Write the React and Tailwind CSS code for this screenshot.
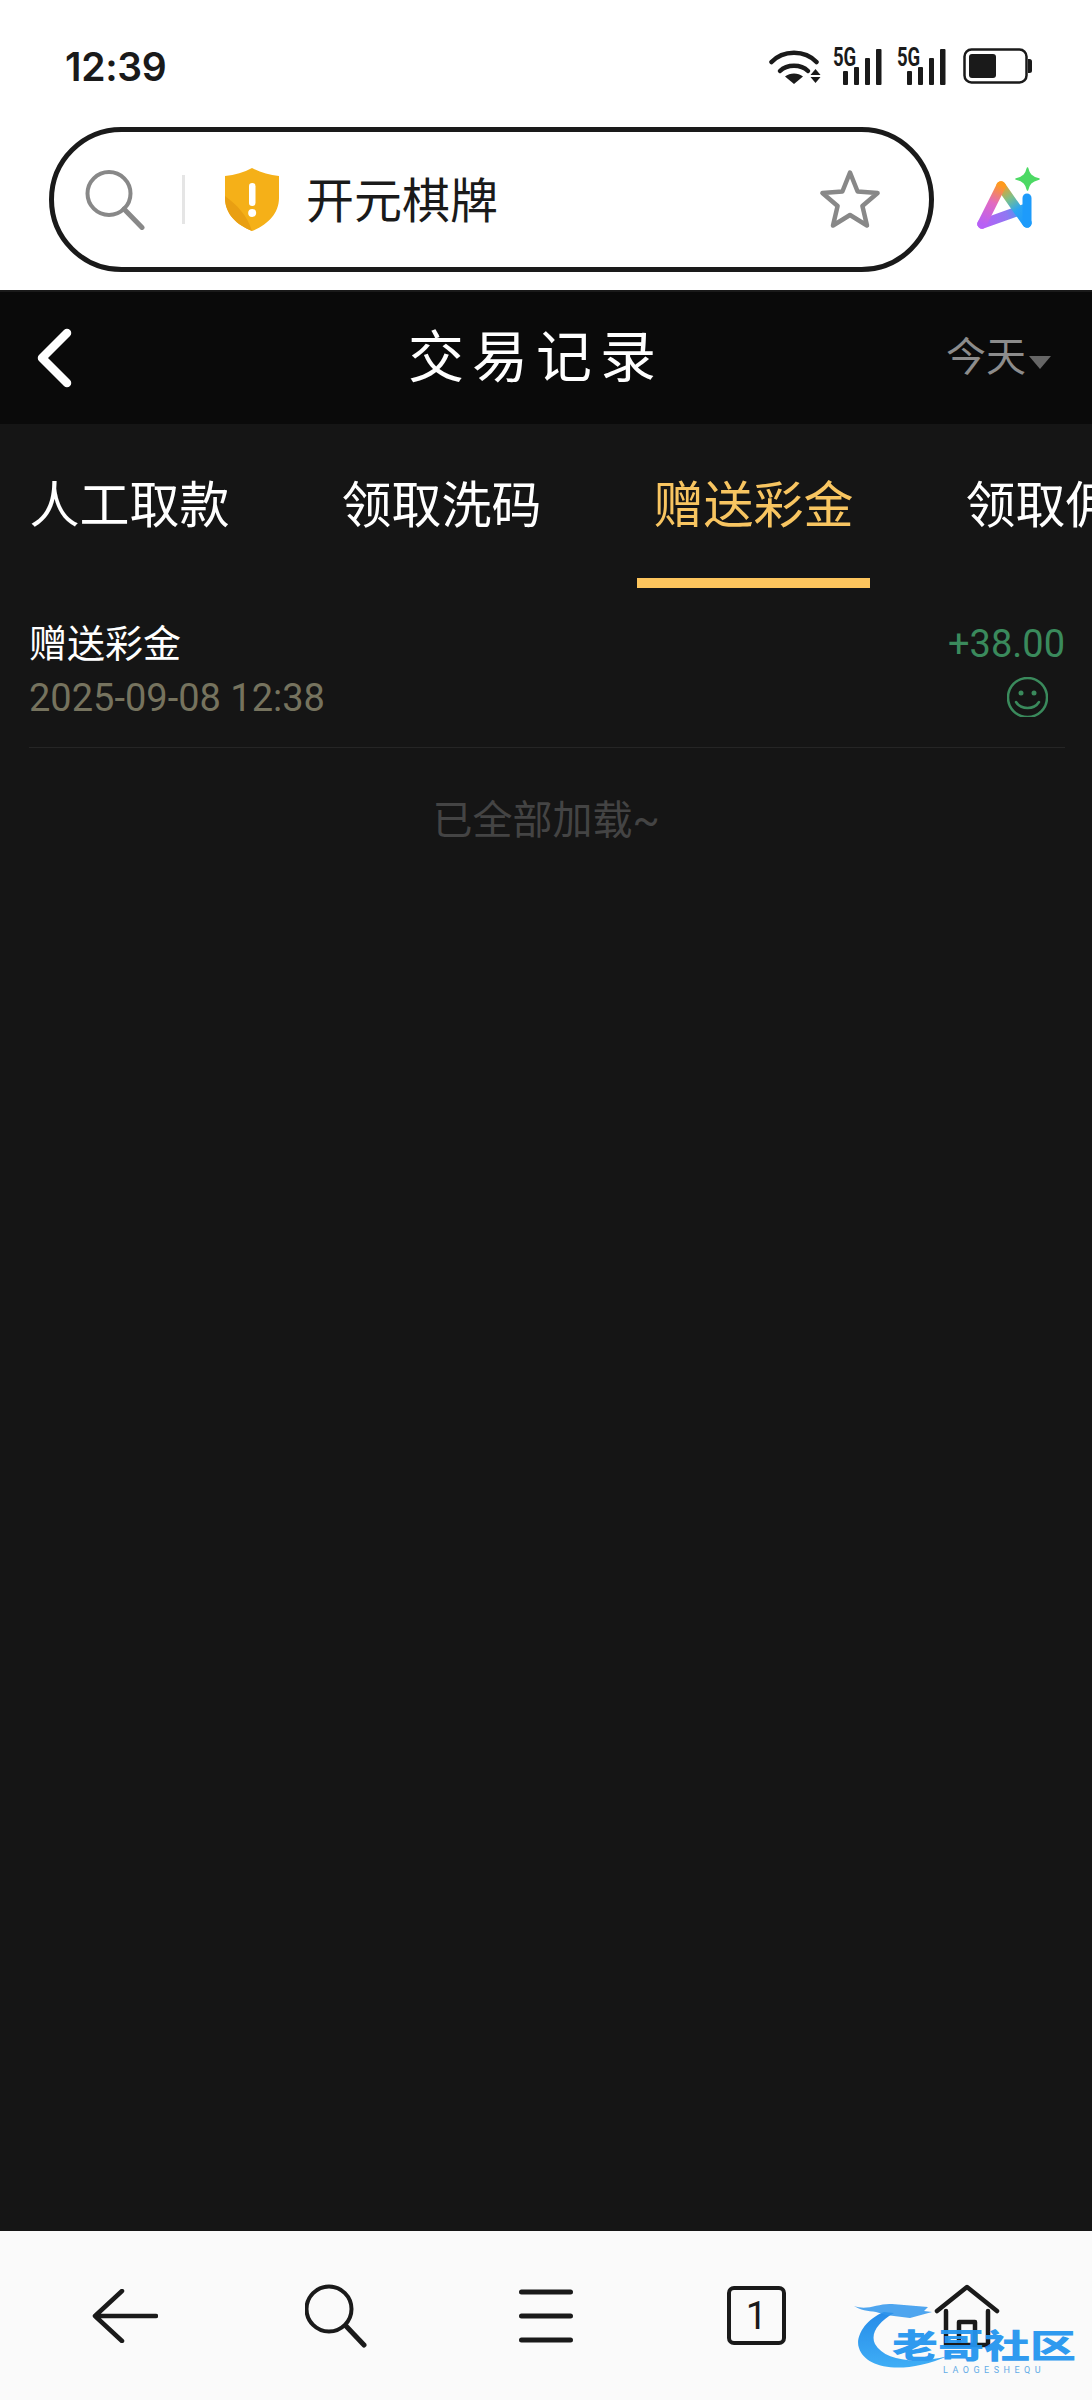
import React from 'react';

const CJK = "font-['Roboto','Noto_Sans_CJK_SC',sans-serif]";

const TABS = ['人工取款', '领取洗码', '赠送彩金', '领取佣金'];

const WifiIcon = () => (
    <svg width="52" height="38" viewBox="0 0 52 38" fill="none" className="-mr-[3px] shrink-0">
        <path d="M2.5 15C14 2.5 36 2.5 47.5 15" stroke="#1a1a1a" strokeWidth="4.5" strokeLinecap="round" />
        <path d="M11 24C18 17 32 17 39 24" stroke="#1a1a1a" strokeWidth="4.5" strokeLinecap="round" />
        <path d="M16 29.5C21 25.5 29 25.5 34 29.5L25 37Z" fill="#1a1a1a" />
        <path d="M46.5 22L51.5 28H41.5Z" fill="#1a1a1a" />
        <path d="M41.5 30H51.5L46.5 36Z" fill="#1a1a1a" />
    </svg>
);

const SignalIcon = () => (
    <div className="relative h-[37px] w-[49px] shrink-0">
        <svg width="49" height="37" viewBox="0 0 49 37" className="absolute inset-0">
            <rect x="10" y="23" width="5" height="14" rx="1" fill="#1a1a1a" />
            <rect x="21" y="19" width="5" height="18" rx="1" fill="#1a1a1a" />
            <rect x="32" y="10" width="5" height="27" rx="1" fill="#1a1a1a" />
            <rect x="43" y="1" width="5.5" height="36" rx="1" fill="#1a1a1a" />
        </svg>
        <span className="absolute left-0 top-[-4px] origin-left scale-x-[.74] font-['Roboto',sans-serif] text-[25px] leading-[28px] font-bold text-[#1a1a1a]">5G</span>
    </div>
);

const BatteryIcon = () => (
    <svg width="71" height="36" viewBox="0 0 71 36" className="shrink-0">
        <rect x="3.5" y="1.5" width="62" height="33" rx="7" fill="none" stroke="#1a1a1a" strokeWidth="2.5" />
        <rect x="8" y="6" width="27" height="24" rx="3" fill="#1a1a1a" />
        <path d="M67 11h1.5a2.5 2.5 0 0 1 2.5 2.5v9a2.5 2.5 0 0 1-2.5 2.5H67Z" fill="#1a1a1a" />
    </svg>
);

const StatusBar = () => (
    <div className="flex h-[127px] items-center justify-between pt-[5px] pr-[60px] pl-[65px]">
        <span className="font-['Inter',sans-serif] text-[39px] leading-none font-semibold tracking-[-0.3px] text-[#1a1a1a]">12:39</span>
        <div className="flex items-center gap-[15px]">
            <WifiIcon />
            <SignalIcon />
            <SignalIcon />
            <BatteryIcon />
        </div>
    </div>
);

const AiLogo = () => (
    <svg width="66" height="70" viewBox="0 0 66 70" fill="none" className="shrink-0">
        <defs>
            <linearGradient id="legLeft" gradientUnits="userSpaceOnUse" x1="8" y1="61" x2="27" y2="22">
                <stop offset="0" stopColor="#b760f6" />
                <stop offset=".55" stopColor="#e26ac0" />
                <stop offset="1" stopColor="#ff9a1c" />
            </linearGradient>
            <linearGradient id="legRight" gradientUnits="userSpaceOnUse" x1="27" y1="22" x2="53" y2="60">
                <stop offset="0" stopColor="#ff9a1c" />
                <stop offset=".35" stopColor="#7cc08a" />
                <stop offset=".65" stopColor="#2aa4f4" />
                <stop offset="1" stopColor="#1d9bfb" />
            </linearGradient>
            <linearGradient id="legBar" gradientUnits="userSpaceOnUse" x1="8" y1="61" x2="50" y2="46">
                <stop offset="0" stopColor="#b760f6" />
                <stop offset=".6" stopColor="#8f78f2" />
                <stop offset="1" stopColor="#2aa4f4" />
            </linearGradient>
        </defs>
        <path d="M8 61L50 46" stroke="url(#legBar)" strokeWidth="9.500" strokeLinecap="round" />
        <path d="M27 23L53 60" stroke="url(#legRight)" strokeWidth="9.500" strokeLinecap="round" />
        <path d="M8 61L27 23" stroke="url(#legLeft)" strokeWidth="9.500" strokeLinecap="round" />
        <path d="M53 35V60" stroke="#1d9bfb" strokeWidth="9" strokeLinecap="round" />
        <path d="M53.500 5C55 11 57 14 65 16C57 18 55 21 53.500 27C52 21 50 18 42 16C50 14 52 11 53.500 5Z" fill="#4cd964" stroke="#4cd964" strokeWidth="1.500" strokeLinejoin="round" />
    </svg>
);

const AddressBar = () => (
    <div className="flex h-[163px] items-start pl-[49px]">
        <div className="flex h-[145px] w-[885px] items-center rounded-full border-[5px] border-[#1a1a1a] bg-white pr-[47px] pl-[31px]">
            <svg width="60" height="60" viewBox="0 0 60 60" fill="none" className="shrink-0">
                <circle cx="24" cy="23.5" r="21.5" stroke="#888" strokeWidth="4" />
                <path d="M39 39L57 57.5" stroke="#888" strokeWidth="5" strokeLinecap="round" />
            </svg>
            <div className="ml-[37px] h-[49px] w-[3px] shrink-0 bg-[#e5e5e5]" />
            <svg width="54" height="63" viewBox="0 0 54 63" className="ml-[40px] shrink-0">
                <path d="M27 0C35 4.500 44 7 54 8V30C54 46 42 57 27 63C12 57 0 46 0 30V8C10 7 19 4.500 27 0Z" fill="#f5b018" />
                <path d="M0 30C0 46 12 57 27 63C22 47 12 37 0 28Z" fill="#e99f12" />
                <rect x="24" y="15" width="6.500" height="23" rx="3.200" fill="#fff" />
                <circle cx="27.200" cy="45" r="4" fill="#fff" />
            </svg>
            <span className={`${CJK} ml-[27px] pt-[5px] text-[48px] leading-none text-[#1a1a1a]`}>开元棋牌</span>
            <svg width="64" height="62" viewBox="0 0 64 62" fill="none" className="ml-auto shrink-0">
                <path d="M32 3.500L39.600 22.500L59.600 24L44.400 37L49 56.500L32 46L15 56.500L19.600 37L4.400 24L24.400 22.500Z" stroke="#888" strokeWidth="4.500" strokeLinejoin="round" />
            </svg>
        </div>
        <div className="mt-[36px] ml-[40px]">
            <AiLogo />
        </div>
    </div>
);

const TopBar = () => (
    <div className="flex h-[134px] shrink-0 items-center border-t-2 border-[#1a1a1a] bg-[#0a0a0a]">
        <div className="w-[126px] shrink-0 pl-[36px]">
            <svg width="36" height="60" viewBox="0 0 36 60" fill="none">
                <path d="M31 5L6 30L31 55" stroke="#fff" strokeWidth="8.500" strokeLinecap="round" strokeLinejoin="round" />
            </svg>
        </div>
        <h1 className={`${CJK} flex-1 text-center text-[56px] leading-none font-normal tracking-[8px] text-white`}>交易记录</h1>
        <div className="flex w-[146px] shrink-0 items-center">
            <span className={`${CJK} text-[40px] leading-none text-[#8c8c8c]`}>今天</span>
            <span className="mt-[8px] ml-[3px] h-0 w-0 border-x-[11px] border-t-[13px] border-x-transparent border-t-[#666]" />
        </div>
    </div>
);

const TabStrip = () => (
    <div className="flex gap-[79px] overflow-hidden pl-[13px]">
        {TABS.map((tab, i) => (
            <div
                key={tab}
                className={`${CJK} flex h-[164px] w-[233px] shrink-0 items-center justify-center pt-[10px] text-[50px] leading-none whitespace-nowrap ${i === 2 ? 'border-b-[10px] border-[#fdc55d] text-[#f8c561]' : 'border-b-[10px] border-transparent text-white'}`}
            >
                {tab}
            </div>
        ))}
    </div>
);

const RecordRow = () => (
    <div className="mr-[27px] ml-[29px] flex h-[160px] justify-between border-b border-[#252525] pt-[33px]">
        <div>
            <div className={`${CJK} text-[38px] leading-[46px] text-white`}>赠送彩金</div>
            <div className={`${CJK} mt-[8px] text-[38px] leading-[46px] text-[#76735e]`}>2025-09-08 12:38</div>
        </div>
        <div className="flex flex-col items-end">
            <div className="font-['Roboto',sans-serif] text-[38px] leading-[46px] text-[#3a8a5c]">+38.00</div>
            <svg width="41" height="40" viewBox="0 0 41 40" fill="none" className="mt-[10px] mr-[17px]">
                <circle cx="20.500" cy="20.500" r="19.500" stroke="#3a8a5c" strokeWidth="2.500" />
                <circle cx="14" cy="16" r="2.500" fill="#3a8a5c" />
                <circle cx="27" cy="16" r="2.500" fill="#3a8a5c" />
                <path d="M9 25C14 33 27 33 32 25" stroke="#3a8a5c" strokeWidth="2.500" strokeLinecap="round" />
            </svg>
        </div>
    </div>
);

const BottomNav = () => (
    <div className="relative grid h-[169px] shrink-0 grid-cols-5 items-center justify-items-center bg-[#fafafa] px-[20px]">
        <svg width="66" height="54" viewBox="0 0 66 54" fill="none">
            <path d="M64 27H3M30 2L3 27L30 52" stroke="#1a1a1a" strokeWidth="4.500" strokeLinecap="round" strokeLinejoin="round" />
        </svg>
        <svg width="62" height="64" viewBox="0 0 62 64" fill="none">
            <circle cx="24" cy="25" r="22.500" stroke="#1a1a1a" strokeWidth="4" />
            <path d="M41 42L59 61" stroke="#1a1a1a" strokeWidth="5" strokeLinecap="round" />
        </svg>
        <svg width="54" height="54" viewBox="0 0 54 54" fill="none">
            <path d="M2.500 3H51.500M2.500 27H51.500M2.500 51H51.500" stroke="#1a1a1a" strokeWidth="5" strokeLinecap="round" />
        </svg>
        <div className="flex h-[59px] w-[59px] items-center justify-center rounded-[7px] border-[4px] border-[#1a1a1a] font-['Roboto',sans-serif] text-[38px] leading-none text-[#1a1a1a]">1</div>
        <svg width="66" height="64" viewBox="0 0 66 64" fill="none">
            <path d="M3 27L33 3L63 27M12 27V61H54V27M25 61V38H41V61" stroke="#1a1a1a" strokeWidth="4.500" strokeLinecap="round" strokeLinejoin="round" />
        </svg>

        {/* site badge sitting over the nav icons */}
        <div className="absolute top-[67px] left-[852px] h-[80px] w-[226px] opacity-95">
            <svg width="100" height="76" viewBox="0 0 100 76" className="absolute top-0 left-0">
                <defs>
                    <linearGradient id="dragon" x1="0" y1="0" x2="0" y2="1">
                        <stop offset="0" stopColor="#1c86e8" />
                        <stop offset="1" stopColor="#35aaf6" />
                    </linearGradient>
                </defs>
                <path d="M32 14C12 22 3 40 7 50C13 70 50 78 96 58C62 67 32 62 23 46C18 36 26 24 42 15Z" fill="url(#dragon)" />
                <path d="M2 8C16 13 26 5 40 6L76 9L72 13L80 14L58 20L34 17L24 14C16 13 8 12 2 8Z" fill="#2490ec" opacity=".85" />
            </svg>
            <span className="absolute top-[25px] left-[40px] origin-left scale-y-[.72] font-['Noto_Sans_CJK_SC',sans-serif] text-[46px] leading-[42px] font-black whitespace-nowrap text-[#2595ef]">老哥社区</span>
            <span className="absolute top-[67px] left-[91px] font-['Roboto',sans-serif] text-[9px] leading-[10px] tracking-[4.500px] whitespace-nowrap text-[#5aa9e6]">LAOGESHEQU</span>
        </div>
    </div>
);

export default function App() {
    return (
        <div className="flex h-[2400px] w-[1092px] flex-col overflow-hidden bg-white">
            <StatusBar />
            <AddressBar />
            <TopBar />
            <main className="flex-1 bg-[#151515]">
                <TabStrip />
                <RecordRow />
                <div className={`${CJK} mt-[43px] text-center text-[40px] leading-[60px] text-[#444]`}>已全部加载~</div>
            </main>
            <BottomNav />
        </div>
    );
}
